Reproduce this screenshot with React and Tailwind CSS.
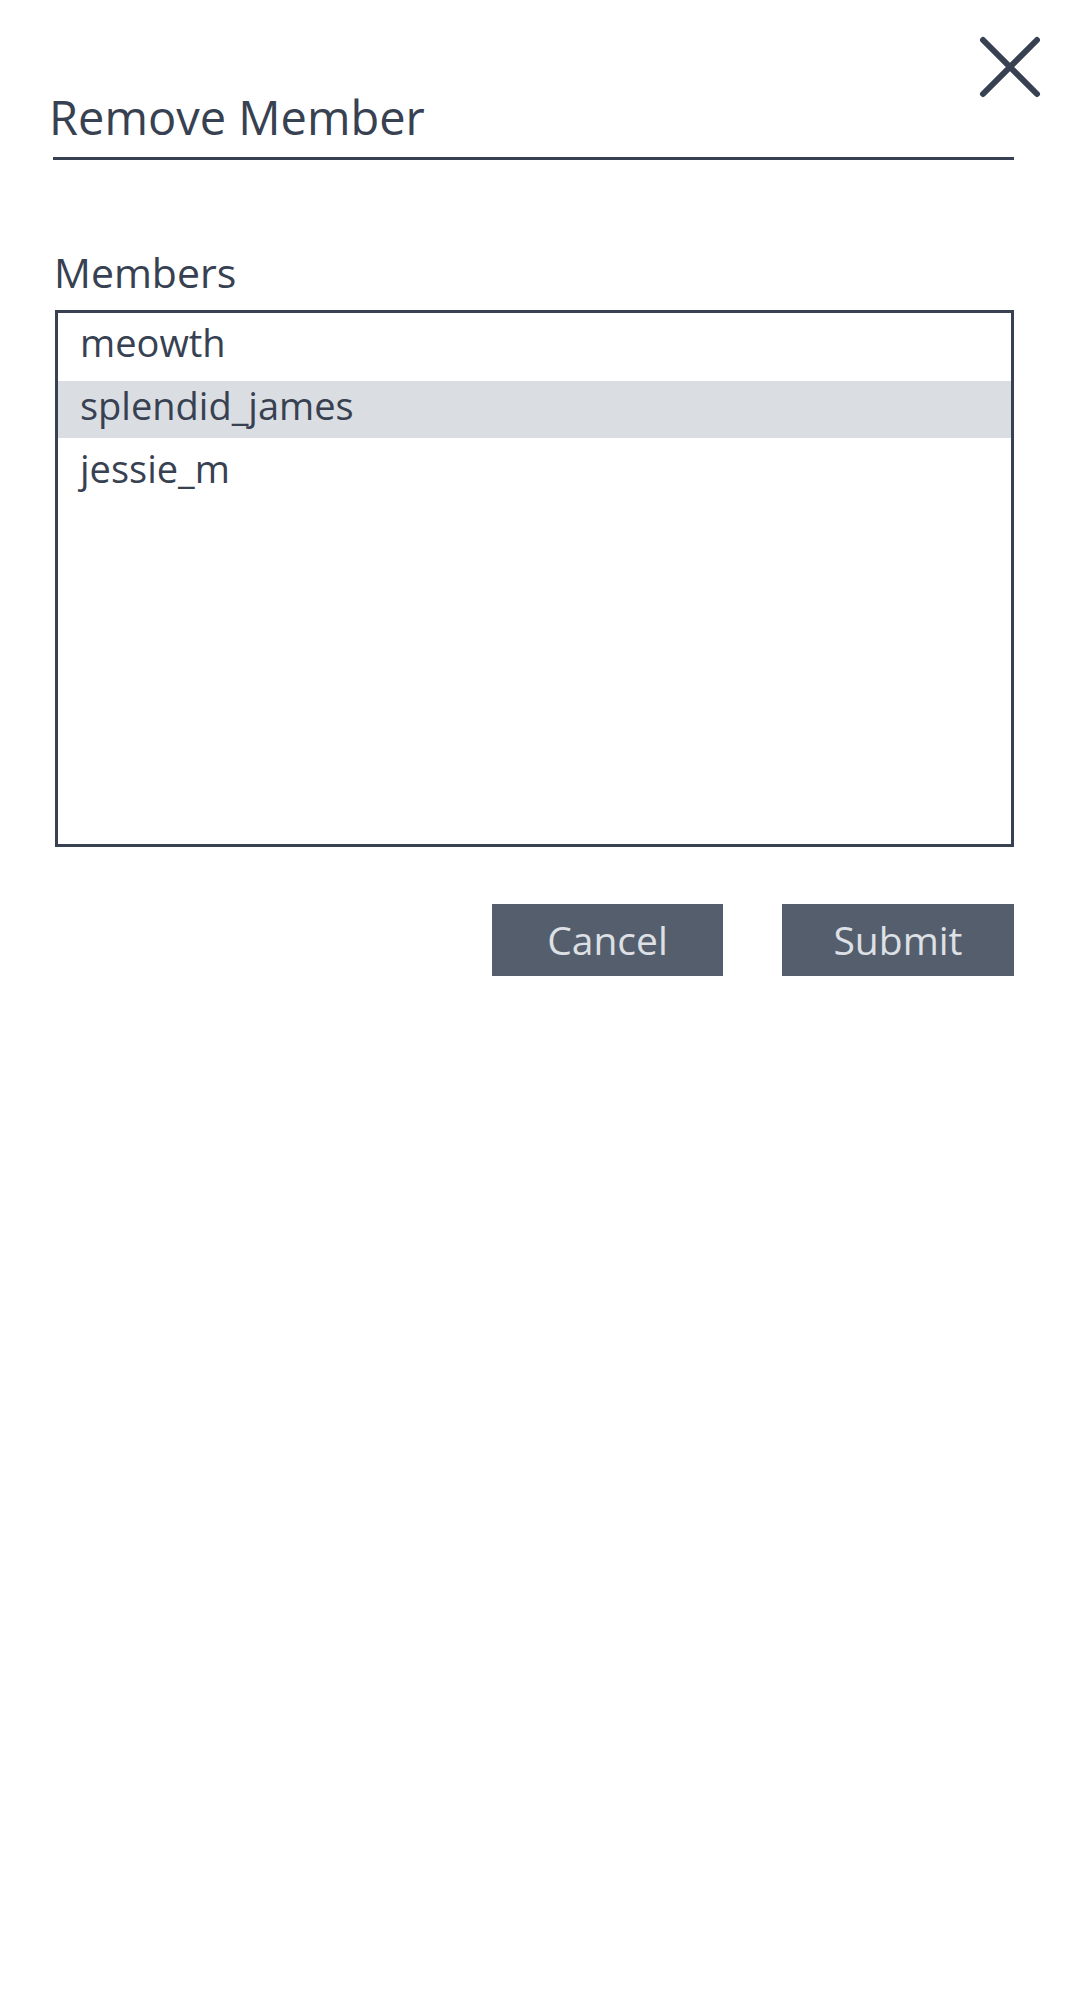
import { useState } from "react";

const members = ["meowth", "splendid_james", "jessie_m"];

export default function App() {
  const [selected, setSelected] = useState("splendid_james");

  return (
    <div
      className="relative min-h-[2000px] w-[1080px] bg-white text-[#374151]"
      style={{ fontFamily: '"Open Sans", "Noto Sans", sans-serif' }}
    >
      <button className="absolute left-[975px] top-[32px]" aria-label="Close">
        <svg width="70" height="70" viewBox="0 0 70 70" fill="none">
          <path
            d="M8 8 L62 62 M62 8 L8 62"
            stroke="#374151"
            strokeWidth="6"
            strokeLinecap="round"
          />
        </svg>
      </button>

      <div className="ml-[53px] w-[961px] pt-[89px]">
        <h2 className="-indent-[4px] border-b-[3px] border-[#374151] pb-[12px] text-[47px] leading-[56px] font-normal">
          Remove Member
        </h2>

        <label className="mt-[88px] block pl-[1px] text-[41px] leading-[48px]">Members</label>

        <div className="mt-[14px] ml-[2px] h-[537px] border-[3px] border-[#374151] pt-[5px]">
          {members.map((m) => (
            <div
              key={m}
              onClick={() => setSelected(m)}
              className={`mb-[6px] h-[57px] cursor-pointer pl-[22px] text-[38px] leading-[48px] ${
                selected === m ? "bg-[#dadde1]" : ""
              }`}
            >
              {m}
            </div>
          ))}
        </div>

        <div className="mt-[57px] flex justify-end gap-[59px]">
          <button className="h-[72px] w-[231px] bg-[#545e6d] text-[39px] leading-[48px] text-[#dde0e4]">
            Cancel
          </button>
          <button className="h-[72px] w-[232px] bg-[#545e6d] text-[39px] leading-[48px] text-[#dde0e4]">
            Submit
          </button>
        </div>
      </div>
    </div>
  );
}
